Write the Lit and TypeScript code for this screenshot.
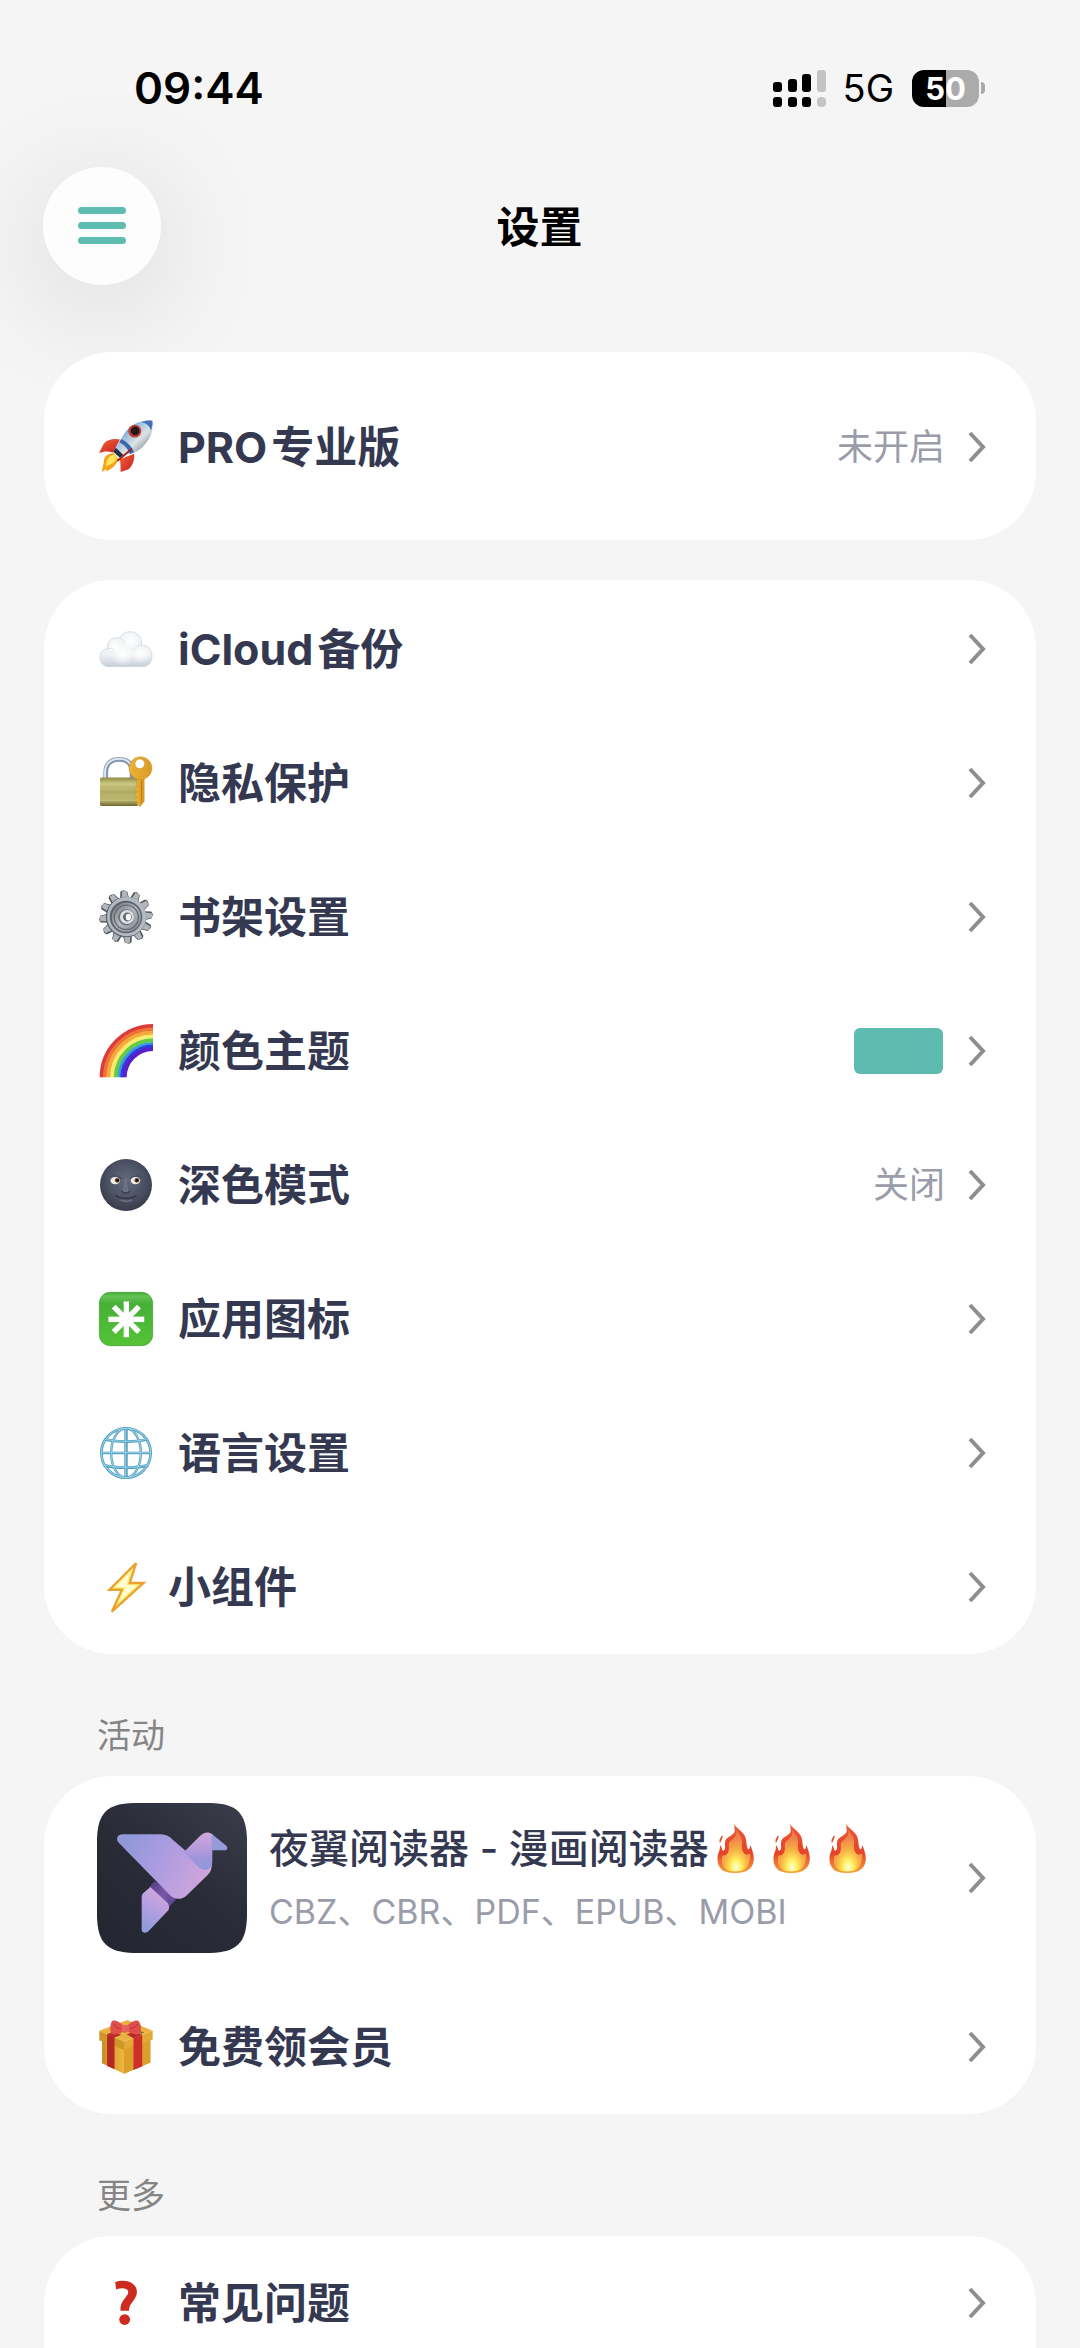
import { LitElement, html, svg, css, nothing } from "lit";
import type { SVGTemplateResult } from "lit";
import { customElement, property } from "lit/decorators.js";

const ray = (n: number) => Array.from({ length: n }, (_, i) => (i * 360) / n);

/* Every row icon is drawn on a 160 x 160 canvas. */
const ICONS: Record<string, SVGTemplateResult> = {
  rocket: svg`
    <defs>
      <linearGradient id="rk-body" x1="0" y1="0" x2="1" y2="1">
        <stop offset="0.1" stop-color="#3f6fb0"/><stop offset="0.38" stop-color="#9dbfe2"/>
        <stop offset="0.58" stop-color="#dfe3e2"/><stop offset="0.8" stop-color="#8b98a8"/><stop offset="1" stop-color="#66727f"/>
      </linearGradient>
      <linearGradient id="rk-fin" x1="0" y1="0" x2="1" y2="1">
        <stop offset="0" stop-color="#f4633a"/><stop offset="1" stop-color="#c41f1c"/>
      </linearGradient>
    </defs>
    <path d="M62 58 C44 54 24 58 14 70 L0 98 C14 92 28 92 42 96 Z" fill="url(#rk-fin)"/>
    <path d="M104 100 C106 118 100 134 88 146 L64 154 C64 142 64 128 62 116 Z" fill="url(#rk-fin)"/>
    <path d="M42 98 C22 100 14 112 14 126 L8 154 L20 146 L24 152 C40 142 54 132 58 114 Z" fill="#f7a11c"/>
    <path d="M44 102 C28 106 22 118 20 138 C34 132 48 126 54 112 Z" fill="#ffe75a"/>
    <path d="M158 2 C126 -2 92 12 74 42 L44 92 L64 110 L114 92 C146 70 164 36 158 2 Z" fill="url(#rk-body)"/>
    <path d="M158 2 C146 0 136 2 126 6 C136 10 148 18 154 30 C158 20 160 10 158 2 Z" fill="#4272b4"/>
    <path d="M66 56 C80 62 98 78 104 96 L92 101 C86 86 74 72 60 66 Z" fill="#3b68ab"/>
    <path d="M50 82 L72 104 L62 112 L42 94 Z" fill="#26303f"/>
    <circle cx="106" cy="33" r="19" fill="#c33a33"/>
    <circle cx="107" cy="32" r="13" fill="#23191d"/>
    <path d="M96 86 L56 120" stroke="#a01818" stroke-width="5" stroke-linecap="round"/>
    <path d="M134 10 C142 14 147 18 150 24" stroke="#c9def2" stroke-width="3" fill="none"/>`,
  cloud: svg`
    <defs>
      <linearGradient id="cl" x1="0" y1="0" x2="0" y2="1">
        <stop offset="0" stop-color="#f1f3f5"/><stop offset="0.65" stop-color="#f1f3f5"/><stop offset="1" stop-color="#c6cfd8"/>
      </linearGradient>
      <radialGradient id="cl-puff"><stop offset="0" stop-color="#ffffff"/><stop offset="1" stop-color="#ffffff" stop-opacity="0"/></radialGradient>
    </defs>
    <path d="M30 132 C12 132 3 120 3 105 C3 90 13 80 25 79 C23 62 34 49 49 47 C54 46 58 47 61 48 C66 36 78 29 92 29 C112 29 126 44 126 62 C126 65 126 67 125 69 C144 68 157 82 157 101 C157 120 146 132 130 132 Z" fill="url(#cl)" stroke="#c6cdd5" stroke-width="2"/>
    <circle cx="94" cy="56" r="28" fill="url(#cl-puff)"/>
    <circle cx="48" cy="72" r="24" fill="url(#cl-puff)"/>
    <circle cx="70" cy="96" r="34" fill="url(#cl-puff)"/>
    <circle cx="122" cy="94" r="30" fill="url(#cl-puff)"/>
    <path d="M61 48 C68 49 73 54 75 60 M25 79 C34 76 42 79 46 84 M125 69 C114 69 105 75 101 84" stroke="#d8dde3" stroke-width="2" fill="none" stroke-linecap="round"/>`,
  lock: svg`
    <defs>
      <linearGradient id="lk" x1="0" y1="0" x2="0" y2="1">
        <stop offset="0" stop-color="#8f8b45"/><stop offset="0.2" stop-color="#c9c480"/>
        <stop offset="0.5" stop-color="#b0ab62"/><stop offset="0.8" stop-color="#bdb870"/><stop offset="1" stop-color="#6d6830"/>
      </linearGradient>
      <linearGradient id="lk-key" x1="0" y1="0" x2="1" y2="0">
        <stop offset="0" stop-color="#ebb339"/><stop offset="1" stop-color="#d99a25"/>
      </linearGradient>
    </defs>
    <path d="M20 66 V48 C20 20 38 10 60 10 C82 10 98 20 98 48 V66" fill="none" stroke="#8494ab" stroke-width="14"/>
    <path d="M18 66 V48 C18 20 38 8 60 8 C76 8 88 14 94 26" fill="none" stroke="#dce6f3" stroke-width="6"/>
    <rect x="3" y="64" width="113" height="84" rx="4" fill="url(#lk)"/>
    <path d="M4 84 H115 M4 100 H115 M4 116 H115 M4 132 H115" stroke="#e6e2ab" stroke-opacity="0.25" stroke-width="2"/>
    <path d="M112 62 H134 V134 L122 150 L112 142 V134 L106 130 L112 122 L106 114 L112 106 L106 98 L112 90 Z" fill="url(#lk-key)" stroke="#b57a17" stroke-width="1"/>
    <path d="M126 72 V140" stroke="#b87b16" stroke-width="3"/>
    <path fill-rule="evenodd" d="M123 2 a34 34 0 1 0 0.1 0 Z M121 9 a14 14 0 1 1 -0.1 0 Z" fill="url(#lk-key)" stroke="#bd8117" stroke-width="1"/>`,
  gear: svg`
    <defs>
      <linearGradient id="gr" x1="0" y1="0" x2="1" y2="1">
        <stop offset="0" stop-color="#6d737b"/><stop offset="0.5" stop-color="#b4b9bf"/><stop offset="1" stop-color="#7b8189"/>
      </linearGradient>
    </defs>
    ${ray(12).map(
      (a) => svg`<g transform="rotate(${a - 5} 80 80)">
        <path d="M67 30 L70 4 L78 0 L90 4 L95 30 Z" fill="#4c5157"/>
        <path d="M71 30 L75 3 L88 3 L93 30 Z" fill="#b1b6bd"/>
      </g>`,
    )}
    <circle cx="80" cy="80" r="60" fill="#5f656d"/>
    <circle cx="82" cy="79" r="58" fill="#b3b9c2"/>
    <circle cx="80" cy="80" r="48" fill="#5d636b"/>
    <circle cx="81" cy="81" r="43" fill="url(#gr)"/>
    <circle cx="81" cy="81" r="36" fill="none" stroke="#646a72" stroke-width="4"/>
    <circle cx="81" cy="81" r="24" fill="#6b7179"/>
    <circle cx="83" cy="80" r="21" fill="#dcdfe3"/>
    <circle cx="84" cy="80" r="13" fill="#5d636b"/>
    <ellipse cx="87" cy="80" rx="8" ry="10" fill="#fff"/>`,
  rainbow: svg`
    ${[
      ["#dd3a3c", 152],
      ["#ee7434", 142],
      ["#f6a93c", 132],
      ["#f9ec6c", 121],
      ["#62cc45", 110],
      ["#3d98e2", 99],
      ["#2e3fe0", 91],
      ["#5a1fc6", 84],
    ].map(
      ([c, r]) =>
        svg`<path d="M${160 - (r as number)} 158 A${r} ${r} 0 0 1 160 ${158 - (r as number)}" fill="none" stroke="${c}" stroke-width="12"/>`,
    )}`,
  moon: svg`
    <defs>
      <radialGradient id="mn" cx="0.5" cy="0.42" r="0.58">
        <stop offset="0" stop-color="#646a7d"/><stop offset="0.6" stop-color="#4c5264"/><stop offset="1" stop-color="#383c4a"/>
      </radialGradient>
    </defs>
    <circle cx="80" cy="80" r="77" fill="url(#mn)"/>
    <path d="M34 57 C42 50 58 52 68 62 M126 57 C118 50 102 52 92 62" stroke="#434859" stroke-width="3" fill="none"/>
    <ellipse cx="48" cy="67" rx="14" ry="11" fill="#f1eee8"/>
    <ellipse cx="108" cy="67" rx="14" ry="11" fill="#f1eee8"/>
    <circle cx="54" cy="66" r="7" fill="#6b4528"/><circle cx="112" cy="66" r="7" fill="#6b4528"/>
    <circle cx="55" cy="66" r="4" fill="#150f0c"/><circle cx="113" cy="66" r="4" fill="#150f0c"/>
    <path d="M75 60 C76 78 71 90 69 97 C72 104 86 104 89 97 C86 90 82 78 83 60" fill="#6a7085"/>
    <path d="M68 97 C71 106 87 106 91 97" stroke="#333747" stroke-width="3" fill="none"/>
    <path d="M50 112 C64 122 96 122 110 112" stroke="#2f3342" stroke-width="4" fill="none" stroke-linecap="round"/>
    <path d="M64 124 C74 129 88 129 98 124" stroke="#6d7388" stroke-width="4" fill="none"/>`,
  asterisk: svg`
    <defs>
      <linearGradient id="as" x1="0" y1="0" x2="0" y2="1">
        <stop offset="0" stop-color="#46a83a"/><stop offset="0.07" stop-color="#66c356"/>
        <stop offset="0.22" stop-color="#46b037"/><stop offset="1" stop-color="#55c337"/>
      </linearGradient>
    </defs>
    <rect x="1" y="1" width="158" height="158" rx="32" fill="url(#as)" stroke="#3b9a2c" stroke-width="2"/>
    ${ray(4).map(
      (a) => svg`<rect x="73" y="28" width="16" height="106" fill="#fff" transform="rotate(${a / 2} 81 81)"/>`,
    )}`,
  globe: svg`
    <g fill="none" stroke="#4f9bbd" stroke-width="8">
      <circle cx="80" cy="80" r="73"/>
      <ellipse cx="80" cy="80" rx="44" ry="73" stroke-width="7"/>
      <path d="M80 4 V156" stroke-width="10"/>
      <path d="M4 80 H156" stroke-width="8"/>
      <path d="M20 40 C50 48 110 48 140 40 M14 116 C50 126 110 126 146 116"/>
    </g>
    <g fill="none" stroke="#98d2e8" stroke-width="3">
      <circle cx="80" cy="80" r="73"/>
      <path d="M79 6 V154 M7 79 H153 M22 39 C50 47 110 47 138 39 M16 115 C50 125 110 125 144 115"/>
      <ellipse cx="80" cy="80" rx="44" ry="73"/>
    </g>`,
  bolt: svg`
    <path d="M110 9 L31 88 L68 88 L38 153 L132 68 L91 68 Z" fill="#fff27a" stroke="#eaa12f" stroke-width="7" stroke-linejoin="miter"/>
    <path d="M93 34 L48 80 L79 81 L58 123 L114 75 L80 75 Z" fill="#fffbd0"/>`,
  gift: svg`
    <defs>
      <linearGradient id="gf" x1="0" y1="0" x2="1" y2="0">
        <stop offset="0" stop-color="#c98a22"/><stop offset="0.45" stop-color="#efb83f"/><stop offset="0.5" stop-color="#e0a32d"/><stop offset="1" stop-color="#c98719"/>
      </linearGradient>
    </defs>
    <path d="M9 56 L74 86 L152 56 V126 L74 159 L9 128 Z" fill="url(#gf)"/>
    <path d="M74 84 L152 54 V126 L74 159 Z" fill="#d9a02a"/>
    <path d="M1 32 L84 0 L159 32 L74 64 Z" fill="#e9b342"/>
    <path d="M1 32 L74 64 V88 L1 60 Z" fill="#cf9528"/>
    <path d="M74 64 L159 32 V58 L74 88 Z" fill="#e2aa35"/>
    <path d="M24 42 L46 52 V146 L24 136 Z" fill="#b52722"/>
    <path d="M102 54 L128 44 V138 L102 148 Z" fill="#cf2f2b"/>
    <path d="M24 42 L44 34 L66 44 L46 52 Z" fill="#b92a26"/>
    <path d="M128 44 L102 54 L82 42 L108 34 Z" fill="#b92a26"/>
    <path d="M118 30 L134 38 L124 40 Z" fill="#5c7a27"/>
    <path d="M72 16 C58 4 44 -2 38 4 C33 14 32 30 36 40 C44 46 60 42 72 34 Z" fill="#df4f4b"/>
    <path d="M84 16 C98 4 112 -2 118 4 C125 14 126 30 122 40 C114 46 98 42 84 34 Z" fill="#df4f4b"/>
    <path d="M44 12 C48 22 60 26 70 26 M114 12 C108 22 98 26 86 26" stroke="#c13936" stroke-width="3" fill="none"/>
    <circle cx="78" cy="26" r="12" fill="#e8635d"/>`,
  question: svg`
    <path d="M48 18 C64 12 84 12 96 20 C110 29 115 42 111 56 C107 68 99 76 94 84 C90 91 89 96 89 103 H64 C62 88 67 78 75 68 C83 59 88 52 86 44 C82 35 66 34 51 40 Z" fill="#cd2b20"/>
    <circle cx="76" cy="129" r="16" fill="#cd2b20"/>`,
};

/* One flame, 112 x 150 canvas. */
const flame = (k: number) => svg`
  <defs>
    <linearGradient id="fl-a${k}" x1="0" y1="0" x2="0" y2="1">
      <stop offset="0" stop-color="#ea5a38"/><stop offset="0.6" stop-color="#e4432a"/><stop offset="1" stop-color="#f6a53a"/>
    </linearGradient>
    <radialGradient id="fl-b${k}" cx="0.5" cy="0.9" r="0.78">
      <stop offset="0" stop-color="#fffde0"/><stop offset="0.22" stop-color="#fff05f"/>
      <stop offset="0.5" stop-color="#f9b445"/><stop offset="0.8" stop-color="#f08a4c"/><stop offset="1" stop-color="#ee7848"/>
    </radialGradient>
  </defs>
  <path d="M51 0 C56 14 82 22 86 46 C88 60 88 68 92 76 C97 76 99 70 97 63 C104 70 104 78 107 86 C112 106 110 124 96 136 C82 150 28 152 12 136 C-3 122 -2 96 6 80 C8 74 8 68 9 64 C14 68 12 78 18 80 C28 76 20 62 24 50 C28 38 50 34 52 22 C53 14 50 8 51 0 Z" fill="url(#fl-a${k})"/>
  <path d="M55 12 C60 28 76 36 74 58 C72 76 78 92 88 92 C92 92 96 90 98 86 C102 108 94 126 82 136 C68 145 36 145 26 136 C12 124 12 108 16 94 C22 96 30 92 34 80 C37 70 32 62 37 54 C46 44 62 40 55 12 Z" fill="url(#fl-b${k})"/>
  <path d="M16 34 C8 40 4 50 8 58 C12 50 16 44 16 34 Z" fill="#e8532f"/>`;

const birdLogo = html`
  <svg class="logo" viewBox="0 0 450 450" role="img" aria-label="夜翼阅读器">
    <defs>
      <linearGradient id="bg" x1="1" y1="0" x2="0.2" y2="1">
        <stop offset="0" stop-color="#3b3d4c"/><stop offset="0.5" stop-color="#2a2c38"/><stop offset="1" stop-color="#242632"/>
      </linearGradient>
      <linearGradient id="wing" gradientUnits="userSpaceOnUse" x1="80" y1="120" x2="310" y2="240">
        <stop offset="0" stop-color="#8f98d8"/><stop offset="0.4" stop-color="#a79be0"/><stop offset="1" stop-color="#cda5dc"/>
      </linearGradient>
      <linearGradient id="neck" x1="0.5" y1="0" x2="0.5" y2="1">
        <stop offset="0" stop-color="#d3a8da"/><stop offset="0.7" stop-color="#a094dc"/><stop offset="1" stop-color="#8c9ad9"/>
      </linearGradient>
      <linearGradient id="tail" x1="0.7" y1="0" x2="0.3" y2="1">
        <stop offset="0" stop-color="#d3a8dc"/><stop offset="0.5" stop-color="#b69fe0"/><stop offset="1" stop-color="#8f9bdb"/>
      </linearGradient>
      <linearGradient id="band" x1="0" y1="0" x2="1" y2="1">
        <stop offset="0" stop-color="#533a80"/><stop offset="0.5" stop-color="#7a58a8"/><stop offset="1" stop-color="#55408a"/>
      </linearGradient>
    </defs>
    <path d="M110 0 H340 C420 2 448 30 450 110 V340 C448 420 420 448 340 450 H110 C30 448 2 420 0 340 V110 C2 30 30 2 110 0 Z" fill="url(#bg)"/>
    <path d="M173 234 L240 286 L216 312 V306 L157 252 Z" fill="url(#band)"/>
    <path d="M160 252 L212 300 C217 306 218 316 214 322 L155 384 C148 392 134 390 134 380 V284 C134 276 136 272 142 268 Z" fill="url(#tail)"/>
    <path d="M76 94 H186 C204 94 216 99 228 111 L320 190 L345 176 C345 196 342 206 332 216 L268 278 C256 290 234 290 222 280 L66 120 C54 108 62 94 76 94 Z" fill="url(#wing)"/>
    <path d="M260 148 L308 100 C320 86 336 85 346 94 V176 C344 200 322 208 304 192 Z" fill="url(#neck)"/>
    <path d="M344 92 L388 128 C394 134 390 142 384 142 L344 142 Z" fill="#959ad8"/>
  </svg>
`;

const chevron = html`
  <svg class="chevron" viewBox="0 0 18 32" aria-hidden="true">
    <path d="M2 2 L15 16 L2 30" fill="none" stroke="#8e8e8e" stroke-width="4"/>
  </svg>
`;

@customElement("status-bar")
class StatusBar extends LitElement {
  static styles = css`
    :host { display: flex; justify-content: space-between; align-items: center; height: 52px; padding: 62px 95px 0 134px; color: #000; }
    .time { font-size: 44px; line-height: 52px; font-weight: 600; }
    .side { display: flex; align-items: center; }
    .signal { width: 53px; height: 37px; margin-right: 17px; }
    .net { font-size: 38px; line-height: 40px; font-weight: 400; margin-right: 18px; }
    .battery { display: flex; align-items: center; justify-content: center; width: 67px; height: 37px; border-radius: 12px; background: linear-gradient(90deg, #000 50%, #ababab 50%); color: #fff; font-size: 31px; line-height: 37px; font-weight: 700; }
    .tip { width: 4px; height: 12px; margin-left: 2px; border-radius: 0 6px 6px 0; background: #ababab; }
  `;
  render() {
    return html`
      <span class="time">09:44</span>
      <div class="side">
        <svg class="signal" viewBox="0 0 53 37" role="img" aria-label="信号">
          <rect x="0" y="12" width="9" height="10" rx="3"/><rect x="15" y="9" width="9" height="13" rx="3"/>
          <rect x="29" y="4" width="9" height="18" rx="3"/><rect x="44" y="0" width="9" height="22" rx="3" fill="#c4c4c4"/>
          <rect x="0" y="27" width="9" height="10" rx="3"/><rect x="15" y="27" width="9" height="10" rx="3"/>
          <rect x="29" y="27" width="9" height="10" rx="3"/><rect x="44" y="27" width="9" height="10" rx="4" fill="#c4c4c4"/>
        </svg>
        <span class="net">5G</span>
        <span class="battery">50</span>
        <span class="tip"></span>
      </div>
    `;
  }
}

@customElement("setting-row")
class SettingRow extends LitElement {
  @property() icon = "";
  @property() latin = "";
  @property() label = "";
  @property() value = "";
  @property({ type: Boolean }) swatch = false;
  @property({ type: Boolean }) snug = false;

  static styles = css`
    :host { display: block; }
    .row { display: flex; align-items: center; width: 100%; height: 134px; margin: 0; padding: 0 50px 0 55px; border: 0; background: none; font: inherit; color: #343951; text-align: left; cursor: pointer; }
    .icon { flex: none; width: 54px; height: 54px; margin-right: 25px; overflow: visible; }
    .snug .icon { margin-right: 15px; }
    .label { display: flex; gap: 4px; flex: 1; font-size: 43px; line-height: 60px; font-weight: 700; }
    .value { font-size: 36px; line-height: 52px; color: #9a9caa; }
    .swatch { width: 89px; height: 46px; margin-right: 2px; border-radius: 6px; background: #5dbbb0; }
    .chevron { flex: none; width: 18px; height: 32px; margin-left: 23px; }
  `;
  render() {
    return html`
      <button class="row ${this.snug ? "snug" : ""}" type="button">
        <svg class="icon" viewBox="0 0 160 160" aria-hidden="true">${ICONS[this.icon]}</svg>
        <span class="label">
          ${this.latin ? html`<span>${this.latin}</span>` : nothing}
          <span>${this.label}</span>
        </span>
        ${this.value ? html`<span class="value">${this.value}</span>` : nothing}
        ${this.swatch ? html`<span class="swatch"></span>` : nothing}
        ${chevron}
      </button>
    `;
  }
}

@customElement("promo-row")
class PromoRow extends LitElement {
  static styles = css`
    :host { display: block; }
    .promo { display: flex; align-items: center; height: 204px; padding: 0 50px 0 53px; color: #343951; text-decoration: none; }
    .logo { flex: none; width: 150px; height: 150px; margin-right: 22px; }
    .body { display: flex; flex-direction: column; flex: 1; padding-top: 4px; }
    .title { display: flex; align-items: center; font-size: 40px; line-height: 63px; font-weight: 500; white-space: pre; }
    .sub { font-size: 34px; line-height: 63px; color: #9a9caa; }
    .flames { display: flex; gap: 18px; margin-left: 8px; }
    .flame { width: 38px; height: 50px; }
    .chevron { flex: none; width: 18px; height: 32px; }
  `;
  render() {
    return html`
      <a class="promo" href="#reader">
        ${birdLogo}
        <span class="body">
          <span class="title"><span>夜翼阅读器 - 漫画阅读器</span><span class="flames">${[0, 1, 2].map(
            (k) => html`<svg class="flame" viewBox="0 0 112 150" aria-hidden="true">${flame(k)}</svg>`,
          )}</span></span>
          <span class="sub">CBZ、CBR、PDF、EPUB、MOBI</span>
        </span>
        ${chevron}
      </a>
    `;
  }
}

@customElement("app-root")
class AppRoot extends LitElement {
  static styles = css`
    :host { display: block; height: 100vh; overflow: hidden; background: #f5f5f5; font-family: Inter, "Noto Sans CJK SC", sans-serif; }
    .bar { display: grid; grid-template-columns: 118px 1fr 118px; align-items: center; padding: 53px 44px 0 43px; }
    .menu { display: flex; align-items: center; justify-content: center; width: 118px; height: 118px; padding: 0; border: 0; border-radius: 50%; background: #fdfdfd; box-shadow: 0 20px 120px rgba(0, 0, 0, 0.14); cursor: pointer; }
    .lines { width: 48px; height: 38px; }
    .heading { margin: 0; padding-top: 2px; text-align: center; font-size: 43px; line-height: 60px; font-weight: 600; color: #000; }
    .list { padding: 67px 44px 0; }
    .card { position: relative; border-radius: 68px; background: #fff; }
    .pro { padding: 28px 0 26px; margin-bottom: 40px; }
    .main { padding: 2px 0 0; }
    .group { margin: 0; padding: 62px 53px 20px; font-size: 34px; line-height: 40px; font-weight: 400; color: #858585; }
    .last { padding-bottom: 134px; }
  `;
  render() {
    return html`
      <status-bar></status-bar>
      <header class="bar">
        <button class="menu" type="button" aria-label="菜单">
          <svg class="lines" viewBox="0 0 48 38" fill="#5fbcb1" aria-hidden="true">
            <rect x="0" y="0" width="48" height="7" rx="3.5"/><rect x="0" y="15" width="48" height="7" rx="3.5"/><rect x="0" y="30" width="48" height="7" rx="3.5"/>
          </svg>
        </button>
        <h1 class="heading">设置</h1>
      </header>
      <main class="list">
        <section class="card pro">
          <setting-row icon="rocket" latin="PRO" label="专业版" value="未开启"></setting-row>
        </section>
        <section class="card main">
          <setting-row icon="cloud" latin="iCloud" label="备份"></setting-row>
          <setting-row icon="lock" label="隐私保护"></setting-row>
          <setting-row icon="gear" label="书架设置"></setting-row>
          <setting-row icon="rainbow" label="颜色主题" swatch></setting-row>
          <setting-row icon="moon" label="深色模式" value="关闭"></setting-row>
          <setting-row icon="asterisk" label="应用图标"></setting-row>
          <setting-row icon="globe" label="语言设置"></setting-row>
          <setting-row icon="bolt" label="小组件" snug></setting-row>
        </section>
        <h2 class="group">活动</h2>
        <section class="card">
          <promo-row></promo-row>
          <setting-row icon="gift" label="免费领会员"></setting-row>
        </section>
        <h2 class="group">更多</h2>
        <section class="card last">
          <setting-row icon="question" label="常见问题"></setting-row>
        </section>
      </main>
    `;
  }
}
